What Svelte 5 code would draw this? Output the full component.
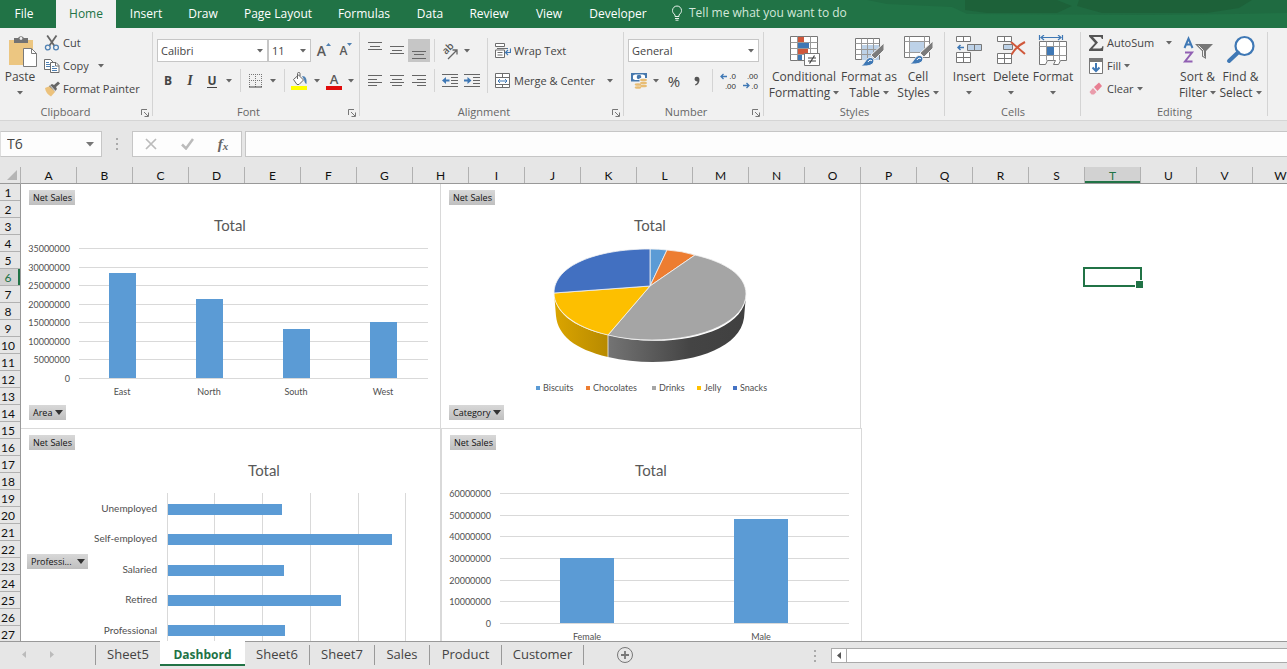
<script>
  const ribbonTabs = [
    { name: 'File', width: 56 },
    { name: 'Home', width: 60, active: true },
    { name: 'Insert', width: 60 },
    { name: 'Draw', width: 54 },
    { name: 'Page Layout', width: 96 },
    { name: 'Formulas', width: 76 },
    { name: 'Data', width: 56 },
    { name: 'Review', width: 62 },
    { name: 'View', width: 58 },
    { name: 'Developer', width: 80 }
  ];

  const columns = 'ABCDEFGHIJKLMNOPQRSTUVW'.split('');
  const rows = Array.from({ length: 27 }, (_, i) => i + 1);

  const sheets = [
    { name: 'Sheet5', width: 64 },
    { name: 'Dashbord', width: 85, active: true },
    { name: 'Sheet6', width: 65 },
    { name: 'Sheet7', width: 65 },
    { name: 'Sales', width: 55 },
    { name: 'Product', width: 72 },
    { name: 'Customer', width: 82 }
  ];

  const areas = [
    { name: 'East', value: 28400000 },
    { name: 'North', value: 21400000 },
    { name: 'South', value: 13300000 },
    { name: 'West', value: 15100000 }
  ];
  const areaTicks = [35000000, 30000000, 25000000, 20000000, 15000000, 10000000, 5000000, 0];
  const areaY = (v) => Math.round(195 - (v / 35000000) * 130);

  const genders = [
    { name: 'Female', value: 30200000 },
    { name: 'Male', value: 48200000 }
  ];
  const genderTicks = [60000000, 50000000, 40000000, 30000000, 20000000, 10000000, 0];
  const genderY = (v) => Math.round(195 - (v / 60000000) * 130);

  const professions = [
    { name: 'Unemployed', length: 114 },
    { name: 'Self-employed', length: 224 },
    { name: 'Salaried', length: 116 },
    { name: 'Retired', length: 173 },
    { name: 'Professional', length: 117 }
  ];

  const legend = [
    { name: 'Biscuits', color: '#5b9bd5', x: 96 },
    { name: 'Chocolates', color: '#ed7d31', x: 146 },
    { name: 'Drinks', color: '#a5a5a5', x: 212 },
    { name: 'Jelly', color: '#ffc000', x: 257 },
    { name: 'Snacks', color: '#4472c4', x: 293 }
  ];

  let fontName = $state('Calibri');
  let fontSize = $state('11');
  let numberFormat = $state('General');
  let cellName = $state('T6');
  let formula = $state('');
</script>

{#snippet arrow()}
  <svg class="arrow" width="6" height="4" viewBox="0 0 6 4" aria-hidden="true"><path d="M0 0h6L3 3.5z" fill="#666" /></svg>
{/snippet}

{#snippet launcher(label)}
  <button class="launcher" aria-label={label}>
    <svg width="8" height="8" viewBox="0 0 8 8" fill="none" stroke="#777"><path d="M.5 6V.5H6M3 3l4 4M7.500 3.500v4h-4" /></svg>
  </button>
{/snippet}

{#snippet lines(list)}
  <svg width="16" height="18" viewBox="0 0 16 18" stroke="#666" aria-hidden="true">
    {#each list as [x1, x2, y]}<path d="M{x1} {y}.5H{x2}" />{/each}
  </svg>
{/snippet}

<div class="app">
  <header class="tabbar">
    <svg class="swirl" width="420" height="16" viewBox="0 0 420 16" preserveAspectRatio="none" aria-hidden="true">
      <path d="M0 0H420V13L370 14L280 15L100 14L85 7L20 4Z" fill="#1f6b41" />
      <path d="M98 0H190L205 6L190 13H120L98 10ZM212 0H385L372 8L340 13H235L210 6Z" fill="#1d6139" />
    </svg>
    <nav>
      {#each ribbonTabs as t}
        <button class="tab" class:active={t.active} style="width:{t.width}px">{t.name}</button>
      {/each}
    </nav>
    <button class="tell">
      <svg width="12" height="16" viewBox="0 0 12 16" fill="none" stroke="#e6f1ea" aria-hidden="true"><path d="M4 11.500V9.800C2.300 8.600 1.500 7.200 1.500 5.500a4.500 4.500 0 0 1 9 0c0 1.700-.8 3.100-2.500 4.300v1.700zM4 13.500h4M4.500 15.200h3" /></svg>
      Tell me what you want to do
    </button>
  </header>

  <section class="ribbon">
    <div class="group clipboard">
      <div class="content">
        <button class="big paste">
          <svg width="30" height="32" viewBox="0 0 30 32" aria-hidden="true">
            <path d="M2 5h24v25H2z" fill="#ecc681" /><path d="M7 3h4a3.500 3.500 0 0 1 6 0h4v5H7z" fill="#737373" /><circle cx="14" cy="3.500" r="1.400" fill="#f1f1f1" />
            <path d="M16.500 13.500h8l5 5v13h-13z" fill="#fff" stroke="#7a7a7a" /><path d="M24.500 13.500v5h5" fill="none" stroke="#7a7a7a" />
          </svg>
          <span>Paste</span>{@render arrow()}
        </button>
        <div class="stack">
          <button class="small">
            <svg width="16" height="16" viewBox="0 0 16 16" fill="none" aria-hidden="true"><path d="M3.200 0.500L10.500 11M12.500 0.500L5.200 11" stroke="#666" stroke-width="1.800" /><circle cx="3.800" cy="12.500" r="2.400" stroke="#4f81b3" stroke-width="1.300" /><circle cx="12" cy="12.500" r="2.400" stroke="#4f81b3" stroke-width="1.300" /></svg>Cut
          </button>
          <button class="small">
            <svg width="16" height="16" viewBox="0 0 16 16" fill="#fff" stroke="#6d6d6d" aria-hidden="true"><path d="M.5 1.500h6l2.500 2.500v7.500H.5z" /><path d="M2 4.500h3M2 6.500h4M2 8.500h4" stroke="#4f81b3" /><path d="M6.500 4.500h5.500l3 3v7h-8.500z" /><path d="M11.500 4.500v3.500H15" fill="none" /><path d="M8 8.500h2.500M8 10.500h5M8 12.500h5" stroke="#4f81b3" /></svg>Copy <i class="gap"></i>{@render arrow()}
          </button>
          <button class="small">
            <svg width="16" height="16" viewBox="0 0 16 16" aria-hidden="true"><path d="M1 7l5-2 5 6-4 4.500C4 14 1.500 11 1 7z" fill="#ecc27c" /><path d="M5 5l3-2 2 1 4-3.500 2 2L12 6l1 2-2 2.500z" fill="#666" /><path d="M6 4.300l5.500 6" stroke="#f1f1f1" /></svg>Format Painter
          </button>
        </div>
      </div>
      <div class="caption">Clipboard{@render launcher('Clipboard options')}</div>
    </div>

    <div class="group font">
      <div class="content rows">
        <div class="line">
          <label class="drop face"><select bind:value={fontName} aria-label="Font"><option>Calibri</option></select>{@render arrow()}</label>
          <label class="drop size"><select bind:value={fontSize} aria-label="Font size"><option>11</option></select>{@render arrow()}</label>
          <button class="cell grow" aria-label="Increase font size"><span>A</span><svg width="5" height="3" viewBox="0 0 5 3"><path d="M0 3h5L2.500 0z" fill="#4f81b3" /></svg></button>
          <button class="cell shrink" aria-label="Decrease font size"><span>A</span><svg width="5" height="3" viewBox="0 0 5 3"><path d="M0 0h5L2.500 3z" fill="#4f81b3" /></svg></button>
        </div>
        <div class="line">
          <button class="cell"><b>B</b></button>
          <button class="cell italic"><b>I</b></button>
          <button class="cell"><b class="under">U</b></button>
          <button class="more" aria-label="Underline styles">{@render arrow()}</button>
          <i class="rule"></i>
          <button class="cell wide" aria-label="Borders">
            <svg width="13" height="14" viewBox="0 0 13 14" stroke="#777" stroke-dasharray="1 1" aria-hidden="true"><path d="M0 .5h13M0 6.500h13M.5 0v13M6.500 0v13M12.500 0v13" /><path d="M0 13h13" stroke="#444" stroke-dasharray="none" /></svg>
          </button>
          <button class="more" aria-label="Border styles">{@render arrow()}</button>
          <i class="rule"></i>
          <button class="cell wide" aria-label="Fill colour">
            <svg width="16" height="18" viewBox="0 0 16 18" aria-hidden="true"><path d="M2.500 7.500L7.500 3l5 5-4.500 4.500H6z" fill="#fff" stroke="#666" /><path d="M6.500 7V1.500c0-1.500 2.500-1.500 2.500 0V4" fill="none" stroke="#666" /><path d="M11 4c4 0 5 3 4.500 8-1.500-.5-2-2-2.300-4z" fill="#4f81b3" /><path d="M0 14h16v4H0z" fill="#ff0" /></svg>
          </button>
          <button class="more" aria-label="Fill colours">{@render arrow()}</button>
          <button class="cell ink" aria-label="Font colour"><span>A</span></button>
          <button class="more" aria-label="Font colours">{@render arrow()}</button>
        </div>
      </div>
      <div class="caption">Font{@render launcher('Font options')}</div>
    </div>

    <div class="group align">
      <div class="content">
        <div class="rows">
          <div class="line">
            <button class="cell" aria-label="Top align">{@render lines([[1, 15, 0], [3, 13, 4], [1, 15, 7]])}</button>
            <button class="cell" aria-label="Middle align">{@render lines([[1, 15, 4], [3, 13, 8], [1, 15, 11]])}</button>
            <button class="cell pressed" aria-label="Bottom align">{@render lines([[1, 15, 9], [3, 13, 12], [1, 15, 16]])}</button>
            <i class="rule"></i>
            <button class="cell" aria-label="Orientation">
              <svg class="turn" width="18" height="18" viewBox="0 0 18 18" aria-hidden="true"><text transform="translate(5 13) rotate(-45)">ab</text><path d="M7 17L15.500 8.500M11.500 8H16v4.500" fill="none" stroke="#666" stroke-width="1.300" /></svg>
            </button>
            <button class="more" aria-label="Orientation choices">{@render arrow()}</button>
          </div>
          <div class="line">
            <button class="cell" aria-label="Align left">{@render lines([[1, 15, 3], [1, 10, 7], [1, 15, 10], [1, 10, 13]])}</button>
            <button class="cell" aria-label="Centre">{@render lines([[1, 15, 3], [3, 13, 7], [1, 15, 10], [3, 13, 13]])}</button>
            <button class="cell" aria-label="Align right">{@render lines([[1, 15, 3], [6, 15, 7], [1, 15, 10], [6, 15, 13]])}</button>
            <i class="rule"></i>
            <button class="cell" aria-label="Decrease indent">
              <svg width="16" height="14" viewBox="0 0 16 14" aria-hidden="true"><path d="M0 .5h16M9 3.500h7M9 6.500h7M9 9.500h7M0 12.500h16" stroke="#666" /><path d="M0 6.500l4-3.500v2.500h3.500v2H4V10z" fill="#3f78b5" /></svg>
            </button>
            <button class="cell" aria-label="Increase indent">
              <svg width="16" height="14" viewBox="0 0 16 14" aria-hidden="true"><path d="M0 .5h16M9 3.500h7M9 6.500h7M9 9.500h7M0 12.500h16" stroke="#666" /><path d="M7.500 6.500L3.500 3v2.500H0v2h3.500V10z" fill="#3f78b5" /></svg>
            </button>
          </div>
        </div>
        <i class="rule tall"></i>
        <div class="rows">
          <button class="small">
            <svg width="16" height="16" viewBox="0 0 16 16" fill="none" stroke="#6d6d6d" aria-hidden="true"><path d="M.5 3.500v-3h9v3zM.5 7v7.500h9V7z" fill="#fff" /><path d="M2 5.500h10M2.500 9.500h5M2.500 12h5" /><path d="M12 5.500h1M15.500 5.500v4H11M13 7l-2.500 2.500L13 12" stroke="#3f78b5" stroke-width="1.200" /></svg>Wrap Text
          </button>
          <button class="small">
            <svg width="16" height="16" viewBox="0 0 16 16" fill="#fff" stroke="#6d6d6d" aria-hidden="true"><path d="M.5 .5h14v14H.5zM.5 4.500h14M.5 11.500h14M7.500 .5v4M7.500 11.500v3.500" /><path d="M3 8h9M5 6L3 8l2 2M10 6l2 2-2 2" fill="none" stroke="#3f78b5" /></svg>Merge &amp; Center <i class="gap"></i>{@render arrow()}
          </button>
        </div>
      </div>
      <div class="caption">Alignment{@render launcher('Alignment options')}</div>
    </div>

    <div class="group number">
      <div class="content rows">
        <label class="drop"><select bind:value={numberFormat} aria-label="Number format"><option>General</option></select>{@render arrow()}</label>
        <div class="line">
          <button class="cell" aria-label="Accounting format">
            <svg width="18" height="17" viewBox="0 0 18 17" aria-hidden="true"><path d="M1 1h16v8.500H1z" fill="#4678ad" /><path d="M3 3.500l2-1h8l2 1v3.500l-2 1H5L3 7z" fill="#fff" /><circle cx="9" cy="5" r="2.300" fill="#4678ad" /><path d="M9.500 6h8v9h-13v-4h5z" fill="#f1f1f1" /><g fill="#e8bd74"><ellipse cx="13.500" cy="8" rx="3.500" ry="1.300" /><ellipse cx="13.500" cy="11" rx="3.500" ry="1.300" /><ellipse cx="13.500" cy="14" rx="3.500" ry="1.300" /><ellipse cx="8" cy="12.500" rx="3.300" ry="1.300" /><ellipse cx="8" cy="15.500" rx="3.300" ry="1.300" /></g></svg>
          </button>
          <button class="more" aria-label="Currencies">{@render arrow()}</button>
          <button class="cell percent">%</button>
          <button class="cell" aria-label="Comma style"><svg width="6" height="10" viewBox="0 0 6 10" aria-hidden="true"><path d="M1 8.500c2-.8 2.500-2 2.500-3C1.800 5.500.5 4.500.5 3A2.300 2.300 0 0 1 2.900.7C4.500.7 5.500 2 5.500 3.700 5.500 6.500 4 8.800 1.500 9.500z" fill="#555" /></svg></button>
          <i class="rule"></i>
          <button class="cell" aria-label="Increase decimal"><svg class="decimal" width="18" height="20" viewBox="0 0 18 20" aria-hidden="true"><text x="17" y="8">.0</text><text x="17" y="18">.00</text><path d="M2 5.500h6M4.500 3L2 5.500 4.500 8" fill="none" stroke="#3f78b5" stroke-width="1.300" /></svg></button>
          <button class="cell" aria-label="Decrease decimal"><svg class="decimal" width="18" height="20" viewBox="0 0 18 20" aria-hidden="true"><text x="17" y="8">.00</text><text x="17" y="18">.0</text><path d="M2 14.500h6M5.500 12L8 14.500 5.500 17" fill="none" stroke="#3f78b5" stroke-width="1.300" /></svg></button>
        </div>
      </div>
      <div class="caption">Number{@render launcher('Number options')}</div>
    </div>

    <div class="group styles">
      <div class="content">
        <button class="big">
          <svg width="32" height="32" viewBox="0 0 32 32" aria-hidden="true">
            <path d="M2.500 1.500h27v24h-27z" fill="#fff" stroke="#777" /><path d="M2.500 7.500h27M2.500 13.500h27M2.500 19.500h27M9.500 1.500v24M22.500 1.500v24" stroke="#999" />
            <path d="M10 2h6v5h-6zM10 14h10v5H10z" fill="#d0583b" /><path d="M10 8h11v5H10zM10 20h4v5h-4z" fill="#3f78b5" />
            <path d="M16.500 18.500h15v12h-15z" fill="#fff" stroke="#777" /><path d="M20 23h8M20 26h8M26.500 20.500l-5 8" stroke="#444" stroke-width="1.200" />
          </svg>
          <span>Conditional</span><span>Formatting{@render arrow()}</span>
        </button>
        <button class="big w62">
          <svg width="32" height="32" viewBox="0 0 32 32" aria-hidden="true">
            <path d="M2.500 3.500h24v21h-24z" fill="#fff" stroke="#777" /><path d="M9 10h17v15H9z" fill="#bdd2e8" /><path d="M2.500 8.500h24M2.500 14.500h24M2.500 19.500h24M8.500 3.500v21M14.500 3.500v21M20.500 3.500v21" stroke="#999" />
            <path d="M31 8v7l-9 9-4-4z" fill="#7b7b7b" stroke="#f1f1f1" /><path d="M8 31c4-2 5-9 10-8.500 3 .5 4 4 1.500 6.500-3 2.500-8 2-11.500 2z" fill="#3f78b5" stroke="#f1f1f1" /><path d="M15 27c1-2 3-2.500 4-1" stroke="#fff" fill="none" />
          </svg>
          <span>Format as</span><span>Table{@render arrow()}</span>
        </button>
        <button class="big w38">
          <svg width="32" height="32" viewBox="0 0 32 32" aria-hidden="true">
            <path d="M2.500 1.500h25v21h-25z" fill="#fff" stroke="#777" /><path d="M2.500 6.500h25M2.500 17.500h25M7.500 1.500v21M22.500 1.500v21" stroke="#999" /><path d="M8 7h14v10H8z" fill="#bdd2e8" />
            <path d="M31 6v7l-9 9-4-4z" fill="#7b7b7b" stroke="#f1f1f1" /><path d="M8 29c4-2 5-9 10-8.500 3 .5 4 4 1.500 6.500-3 2.500-8 2-11.500 2z" fill="#3f78b5" stroke="#f1f1f1" /><path d="M15 25c1-2 3-2.500 4-1" stroke="#fff" fill="none" />
          </svg>
          <span>Cell</span><span>Styles{@render arrow()}</span>
        </button>
      </div>
      <div class="caption">Styles</div>
    </div>

    <div class="group cells">
      <div class="content">
        <button class="big w42">
          <svg width="30" height="32" viewBox="0 0 30 32" fill="#fff" stroke="#777" aria-hidden="true"><path d="M2.500 1.500h14v5h-14zM9.500 1.500v5M2.500 17.500h14v10h-14zM9.500 17.500v10M2.500 22.500h14" /><path d="M13.500 9.500h14v6h-14zM20.500 9.500v6" fill="#bdd2e8" /><path d="M4 12.500h6M6.500 10L4 12.500 6.500 15" fill="none" stroke="#3f78b5" stroke-width="1.500" /></svg>
          <span>Insert</span>{@render arrow()}
        </button>
        <button class="big w42">
          <svg width="30" height="32" viewBox="0 0 30 32" fill="#fff" stroke="#777" aria-hidden="true"><path d="M1.500 1.500h14v5h-14zM8.500 1.500v5M1.500 18.500h14v10h-14zM8.500 18.500v10M1.500 23.500h14" /><path d="M7.500 9.500h9v5h-9z" fill="#bdd2e8" /><path d="M15 7l14 12M29 7C23 10 18 15 15.500 19.500" fill="none" stroke="#d0583b" stroke-width="2" /></svg>
          <span>Delete</span>{@render arrow()}
        </button>
        <button class="big w42">
          <svg width="30" height="32" viewBox="0 0 30 32" fill="#fff" stroke="#777" aria-hidden="true"><path d="M1.500 6.500h27v19h-6l-2 4h-5l2-4h-8l-2 4h-6z" /><path d="M1.500 11.500h27M1.500 20.500h27M8.500 6.500v19M15.500 6.500v5M15.500 20.500v5M21.500 6.500v19" stroke="#999" /><path d="M9 12h7v8H9z" fill="#3f78b5" stroke="none" /><path d="M1.500 0v5M24.500 0v5M3 2.500h20M6 0L3 2.500 6 5M20 0l3 2.500L20 5" fill="none" stroke="#3f78b5" stroke-width="1.200" /></svg>
          <span>Format</span>{@render arrow()}
        </button>
      </div>
      <div class="caption">Cells</div>
    </div>

    <div class="group editing">
      <div class="content">
        <div class="stack">
          <button class="small"><svg width="16" height="16" viewBox="0 0 16 16" aria-hidden="true"><path d="M1 0h14v4h-1.200C13.500 2.500 13 2 11.500 2H5l5 5.500L4.500 13.500H12c1.500 0 2-.8 2.200-2.200H15.500L15 16H1v-1.500L7 8 1 1.500z" fill="#555" /></svg>AutoSum <i class="gap"></i>{@render arrow()}</button>
          <button class="small"><svg width="16" height="16" viewBox="0 0 16 16" aria-hidden="true"><path d="M1.500 .5h13v15h-13z" fill="#fff" stroke="#777" /><path d="M1 0h14v4H1z" fill="#777" /><path d="M8 5v8M4.500 9.500L8 13l3.500-3.500" fill="none" stroke="#3f78b5" stroke-width="2" /></svg>Fill {@render arrow()}</button>
          <button class="small"><svg width="16" height="16" viewBox="0 0 16 16" aria-hidden="true"><path d="M6 6l5-4.500 3 3.500-4.500 5z" fill="#e87f92" /><path d="M5 7l3.500 4-2.500 2.500H3.500L1.500 11z" fill="#e99cab" /></svg>Clear {@render arrow()}</button>
        </div>
        <button class="big">
          <svg width="32" height="32" viewBox="0 0 32 32" aria-hidden="true"><path d="M2.500 13L6.500 3.500L10.500 13M4 9.500h5" fill="none" stroke="#3f78b5" stroke-width="2" /><path d="M3 17.500h7l-7 9h7.500" fill="none" stroke="#9160b3" stroke-width="2" /><path d="M13 9h18l-7 7v8l-4-2.500V16z" fill="#777" /><path d="M16.500 10.500l5 5v5.500l1 .5" stroke="#f1f1f1" fill="none" /></svg>
          <span>Sort &amp;</span><span>Filter{@render arrow()}</span>
        </button>
        <button class="big">
          <svg width="32" height="32" viewBox="0 0 32 32" aria-hidden="true"><circle cx="19.500" cy="11" r="9" fill="#fff" stroke="#3f78b5" stroke-width="2.200" /><path d="M13 17.500L4 26" stroke="#3f78b5" stroke-width="4" stroke-linecap="round" /></svg>
          <span>Find &amp;</span><span>Select{@render arrow()}</span>
        </button>
      </div>
      <div class="caption">Editing</div>
    </div>
  </section>

  <section class="formulabar">
    <label class="namebox"><input bind:value={cellName} aria-label="Name box" />
      <svg width="8" height="5" viewBox="0 0 8 5" aria-hidden="true"><path d="M0 0h8L4 4.500z" fill="#777" /></svg>
    </label>
    <svg class="dots" width="2" height="12" viewBox="0 0 2 12" fill="#aaa" aria-hidden="true"><path d="M0 0h2v2H0zM0 5h2v2H0zM0 10h2v2H0z" /></svg>
    <div class="fxbox">
      <button aria-label="Cancel"><svg width="12" height="12" viewBox="0 0 12 12" stroke="#bbb" stroke-width="1.700"><path d="M1 1l10 10M11 1L1 11" /></svg></button>
      <button aria-label="Enter"><svg width="13" height="12" viewBox="0 0 13 12" fill="none" stroke="#bbb" stroke-width="2.500"><path d="M1 6.500l4 4L12 1" /></svg></button>
      <button class="fx">f<small>x</small></button>
    </div>
    <input class="formula" bind:value={formula} aria-label="Formula" />
  </section>

  <main class="sheet">
    <button class="corner" aria-label="Select all"><svg width="10" height="10" viewBox="0 0 10 10"><path d="M10 0v10H0z" fill="#b5b5b5" /></svg></button>
    <div class="cols">
      {#each columns as c}<div class:current={c === 'T'}>{c}</div>{/each}
    </div>
    <div class="nums">
      {#each rows as r}<div class:current={r === 6}>{r}</div>{/each}
    </div>
    <div class="canvas">
      <figure class="chart area" aria-label="Net sales by area">
        <svg width="421" height="246" viewBox="0 0 421 246">
          <text class="title" x="210" y="48">Total</text>
          {#each areaTicks as t}
            <path class="grid" d="M59 {areaY(t)}.5H408" /><text class="tick" x="50" y={areaY(t) + 4}>{t}</text>
          {/each}
          {#each areas as a, i}
            <rect class="bar" x={89 + i * 87} y={areaY(a.value)} width="27" height={195 - areaY(a.value)} />
            <text class="label" x={102 + i * 87} y="212">{a.name}</text>
          {/each}
        </svg>
        <button class="field top">Net Sales</button>
        <button class="field bottom">Area <svg width="8" height="5" viewBox="0 0 8 5"><path d="M0 0h8L4 5z" fill="#333" /></svg></button>
      </figure>

      <figure class="chart category" aria-label="Net sales by category">
        <svg width="421" height="246" viewBox="0 0 421 246">
          <defs>
            <linearGradient id="goldSide"><stop offset="0" stop-color="#dba500" /><stop offset="1" stop-color="#b78a00" /></linearGradient>
            <linearGradient id="greySide"><stop offset="0" stop-color="#747474" /><stop offset=".6" stop-color="#444" /><stop offset="1" stop-color="#404040" /></linearGradient>
          </defs>
          <text class="title" x="210" y="48">Total</text>
          <path d="M114 109C114 128 131 144 168 152V174C134 166 118 152 116 133Z" fill="url(#goldSide)" />
          <path d="M168 152C230 168 306 150 306 112L304 135C299 172 228 188 168 174Z" fill="url(#greySide)" />
          <g stroke="#f2f2f2" stroke-width=".8" stroke-linejoin="round">
            <path d="M210 103V66Q219 66 227 67Z" fill="#5b9bd5" />
            <path d="M210 103L227 67Q242 68 255 72Z" fill="#ed7d31" />
            <path d="M210 103L255 72C285 79 306 92 306 111C306 137 265 157 212 157Q188 157 168 152Z" fill="#a5a5a5" />
            <path d="M210 103L168 152C133 144 114 127 114 110Z" fill="#fdbf00" />
            <path d="M210 103L114 110C114 83 155 66 210 66Z" fill="#4270c1" />
            <path d="M168 152V174" />
          </g>
          {#each legend as l}
            <rect x={l.x} y="203" width="4" height="4" fill={l.color} /><text class="key" x={l.x + 7} y="208">{l.name}</text>
          {/each}
        </svg>
        <button class="field top">Net Sales</button>
        <button class="field bottom">Category <svg width="8" height="5" viewBox="0 0 8 5"><path d="M0 0h8L4 5z" fill="#333" /></svg></button>
      </figure>

      <figure class="chart profession" aria-label="Net sales by profession">
        <svg width="421" height="246" viewBox="0 0 421 246">
          <text class="title" x="244" y="48">Total</text>
          {#each [147, 194, 242, 290, 338, 385] as x}<path class="grid" d="M{x}.5 65V246" />{/each}
          {#each professions as p, i}
            <rect class="bar" x="148" y={Math.round(76 + i * 30.3)} width={p.length} height="11" />
            <text class="tick" x="137" y={Math.round(84 + i * 30.4)}>{p.name}</text>
          {/each}
        </svg>
        <button class="field top">Net Sales</button>
        <button class="field side">Professi... <svg width="8" height="5" viewBox="0 0 8 5"><path d="M0 0h8L4 5z" fill="#333" /></svg></button>
      </figure>

      <figure class="chart gender" aria-label="Net sales by gender">
        <svg width="421" height="246" viewBox="0 0 421 246">
          <text class="title" x="210" y="48">Total</text>
          {#each genderTicks as t}
            <path class="grid" d="M59 {genderY(t)}.5H408" /><text class="tick" x="50" y={genderY(t) + 4}>{t}</text>
          {/each}
          {#each genders as g, i}
            <rect class="bar" x={119 + i * 174} y={genderY(g.value)} width="54" height={195 - genderY(g.value)} />
            <text class="label" x={146 + i * 174} y="212">{g.name}</text>
          {/each}
        </svg>
        <button class="field top">Net Sales</button>
      </figure>

      <div class="selection"></div>
    </div>
  </main>

  <footer class="sheets">
    <div class="scrollers">
      <button aria-label="Previous sheet"><svg width="4" height="7" viewBox="0 0 4 7"><path d="M4 0v7L0 3.500z" fill="#bbb" /></svg></button>
      <button aria-label="Next sheet"><svg width="4" height="7" viewBox="0 0 4 7"><path d="M0 0v7l4-3.500z" fill="#bbb" /></svg></button>
    </div>
    <nav>
      {#each sheets as s}
        <button class="sheettab" class:active={s.active} style="width:{s.width}px">{s.name}</button>
      {/each}
    </nav>
    <button class="add" aria-label="New sheet"><svg width="18" height="18" viewBox="0 0 18 18" fill="none" stroke="#777"><circle cx="9" cy="9" r="7.500" /><path d="M9 5v8M5 9h8" stroke-width="1.800" /></svg></button>
    <svg class="dots" width="2" height="12" viewBox="0 0 2 12" fill="#aaa" aria-hidden="true"><path d="M0 0h2v2H0zM0 5h2v2H0zM0 10h2v2H0z" /></svg>
    <div class="hscroll">
      <button aria-label="Scroll left"><svg width="4" height="7" viewBox="0 0 4 7"><path d="M4 0v7L0 3.500z" fill="#555" /></svg></button>
      <div class="track"></div>
    </div>
  </footer>
</div>

<style>
  :global(body) { margin: 0; overflow: hidden; }
  .app { height: 100vh; display: flex; flex-direction: column; background: #e6e6e6; color: #444; font: 12px/16px "Open Sans", "Noto Sans", sans-serif; overflow: hidden; }
  .app * { box-sizing: border-box; }
  button, select, input { font: inherit; color: inherit; border: 0; padding: 0; margin: 0; background: none; border-radius: 0; outline: none; white-space: nowrap; }
  svg { flex: none; display: block; }

  .tabbar { position: relative; display: flex; height: 28px; background: #217346; flex: none; }
  .swirl { position: absolute; right: 0; top: 0; }
  .tabbar nav { display: flex; }
  .tab { color: #fff; font-size: 12px; }
  .tab:first-child { padding-right: 8px; }
  .tab.active { background: #f1f1f1; color: #217346; }
  .tell { display: flex; align-items: center; gap: 6px; padding: 0 0 2px 13px; color: #d3e8da; }

  .ribbon { display: flex; height: 93px; flex: none; background: #f1f1f1; border-bottom: 1px solid #d5d5d5; font-size: 12px; }
  .group { position: relative; display: flex; flex-direction: column; padding-top: 3px; flex: none; }
  .group::after { content: ""; position: absolute; right: 0; top: 4px; bottom: 4px; width: 1px; background: #d4d4d4; }
  .content { display: flex; height: 71px; }
  .caption { height: 18px; line-height: 20px; text-align: center; color: #666; font-size: 11px; }
  .launcher { position: absolute; right: 4px; bottom: 3px; }
  .clipboard { width: 153px; } .font { width: 207px; } .align { width: 264px; } .number { width: 140px; }
  .styles { width: 181px; } .cells { width: 136px; } .editing { width: 187px; }
  .clipboard .caption { padding-right: 22px; } .font .caption, .align .caption, .number .caption { padding-right: 16px; }
  .arrow { display: inline-block; }
  .big { display: flex; flex-direction: column; align-items: center; padding-top: 4px; font-size: 12px; }
  .big > svg:first-child { margin-bottom: 2px; }
  .big > .arrow { margin-top: 6px; }
  .big span .arrow { margin: 0 0 2px 3px; }
  .paste { width: 40px; }
  .paste > svg:first-child { margin-left: 4px; }
  .stack { display: flex; flex-direction: column; padding-left: 4px; }
  .small { display: flex; align-items: center; height: 23px; gap: 3px; font-size: 11px; }
  .gap { width: 3px; }
  .rows { display: flex; flex-direction: column; gap: 7px; padding-top: 8px; }
  .font .rows, .number .rows { padding-left: 4px; }
  .line { display: flex; align-items: center; height: 23px; }
  .drop { position: relative; display: flex; height: 23px; background: #fff; border: 1px solid #c6c6c6; }
  .drop select { appearance: none; width: 100%; padding-left: 3px; font-size: 11px; }
  .drop .arrow { position: absolute; right: 4px; top: 9px; }
  .face { width: 111px; } .size { width: 43px; } .number .drop { width: 131px; }
  .cell { display: flex; align-items: center; justify-content: center; width: 22px; height: 23px; flex: none; font-size: 12px; }
  .pressed { background: #c6c6c6; }
  .wide { width: 24px; }
  .more { width: 12px; height: 23px; flex: none; display: flex; align-items: center; justify-content: center; }
  .rule { width: 1px; height: 23px; background: #d4d4d4; margin: 0 4px; flex: none; }
  .tall { height: 55px; margin: 7px 7px 0 4px; }
  .font .rule { margin: 0 2px 0 5px; }
  .italic { font-family: "Liberation Serif", serif; font-style: italic; font-size: 14px; }
  .under { border-bottom: 1px solid #444; line-height: 13px; }
  .grow { font-size: 14px; font-weight: 600; align-items: center; margin-left: 2px; color: #5a5a5a; }
  .shrink { font-size: 12px; font-weight: 600; color: #5a5a5a; }
  .grow svg, .shrink svg { margin-bottom: 12px; }
  .ink span { font-size: 13px; font-weight: 600; color: #5a5a5a; line-height: 14px; width: 16px; border-bottom: 4px solid #e00b0b; }
  .turn, .decimal { overflow: visible; }
  .turn text { font: 600 10px "Open Sans", sans-serif; fill: #555; }
  .decimal text { font: 8px "Liberation Sans", sans-serif; fill: #333; text-anchor: end; }
  .align .content { padding-left: 4px; }
  .align .small .gap { width: 6px; }
  .percent { font-size: 15px; width: 24px; }
  .styles .content { padding-left: 3px; }
  .styles .big { width: 74px; }
  .styles .w62 { width: 56px; } .styles .w38 { width: 42px; }
  .cells .content { padding-left: 3px; }
  .w42 { width: 42px; }
  .editing .stack { width: 95px; padding-left: 7px; }
  .editing .small .gap { width: 6px; }
  .editing .big { width: 43px; }

  .formulabar { display: flex; height: 46px; padding: 10px 0; flex: none; }
  .namebox { display: flex; align-items: center; width: 102px; background: #fdfdfd; border: 1px solid #c6c6c6; border-left-color: #ddd; padding-right: 7px; }
  .namebox input { flex: 1; min-width: 0; padding-left: 6px; font-size: 14px; }
  .dots { margin: 7px 14px; }
  .fxbox { display: flex; justify-content: space-between; width: 110px; background: #fdfdfd; border: 1px solid #c6c6c6; }
  .fxbox button { width: 36px; display: flex; align-items: center; justify-content: center; }
  .fxbox .fx { font: italic bold 15px "Liberation Serif", serif; color: #666; }
  .fx small { font-size: 11px; margin-top: 4px; }
  .formula { flex: 1; min-width: 0; margin-left: 3px; background: #fdfdfd; border: 1px solid #c6c6c6; border-right: 0; padding: 0 6px; }

  .sheet { flex: 1; min-height: 0; display: grid; grid-template: 17px 1fr / 21px 1fr; overflow: hidden; font: 12px/16px Lato, "Open Sans", sans-serif; color: #111; }
  .corner { border-right: 1px solid #b1b1b1; border-bottom: 1px solid #999; display: flex; align-items: flex-end; justify-content: flex-end; padding: 3px; }
  .cols { display: flex; overflow: hidden; border-bottom: 1px solid #999; }
  .cols div { width: 56px; flex: none; text-align: center; border-right: 1px solid #b1b1b1; line-height: 18px; }
  .cols .current { background: #d2d2d2; color: #217346; box-shadow: inset 0 -2px #217346; }
  .nums { overflow: hidden; border-right: 1px solid #999; }
  .nums div { height: 17px; line-height: 18px; text-align: center; padding-right: 4px; border-bottom: 1px solid #b1b1b1; }
  .nums .current { background: #d2d2d2; color: #217346; box-shadow: inset -2px 0 #217346; }
  .canvas { position: relative; overflow: hidden; background: #fff; }
  .chart { position: absolute; margin: 0; width: 421px; height: 246px; background: #fff; box-shadow: inset 0 0 0 1px #d9d9d9; }
  .area { left: -1px; top: -1px; }
  .category { left: 419px; top: -1px; }
  .profession { left: -1px; top: 244px; }
  .gender { left: 420px; top: 244px; }
  .chart text { font-family: Lato, sans-serif; font-size: 9px; fill: #505050; }
  .chart .title { font-size: 15px; text-anchor: middle; fill: #595959; }
  .chart .tick { text-anchor: end; }
  .profession .tick { font-size: 10px; }
  .chart .label { text-anchor: middle; }
  .grid { stroke: #d9d9d9; }
  .bar { fill: #5b9bd5; }
  .field { position: absolute; left: 9px; display: flex; align-items: center; gap: 3px; height: 15px; padding: 0 3px 0 4px; background: linear-gradient(#d8d8d8, #bfbfbf); color: #111; font: 9px/15px "Open Sans", sans-serif; }
  .top { top: 7px; }
  .bottom { top: 222px; }
  .side { left: 7px; top: 126px; gap: 5px; }
  .selection { position: absolute; left: 1062px; top: 83px; width: 59px; height: 20px; border: 2px solid #217346; }
  .selection::after { content: ""; position: absolute; right: -4px; bottom: -4px; width: 7px; height: 7px; background: #217346; border: 1px solid #fff; }

  .sheets { display: flex; height: 28px; flex: none; border-top: 1px solid #999; font-size: 13px; }
  .scrollers { display: flex; width: 96px; padding: 0 0 2px 10px; }
  .scrollers button { width: 28px; display: flex; align-items: center; justify-content: center; }
  .sheets nav { display: flex; height: 24px; }
  .sheettab { height: 20px; margin-top: 3px; border-right: 1px solid #999; font-size: 13px; line-height: 18px; padding-bottom: 2px; }
  .sheettab:first-child { box-shadow: -1px 0 #999; border-right: 0; }
  .sheettab.active { margin-top: -1px; height: 25px; padding: 4px 0 0; background: #fff; color: #217346; font-weight: 700; font-size: 12px; border: 0; border-bottom: 2px solid #217346; }
  .add { margin: 0 0 2px 32px; }
  .sheets .dots { margin: 8px 15px 0 auto; }
  .hscroll { display: flex; width: 456px; height: 15px; margin-top: 6px; }
  .hscroll button { width: 16px; border: 1px solid #aaa; background: #fff; display: flex; align-items: center; justify-content: center; }
  .track { flex: 1; background: #fff; border: solid #aaa; border-width: 1px 0; }
</style>
